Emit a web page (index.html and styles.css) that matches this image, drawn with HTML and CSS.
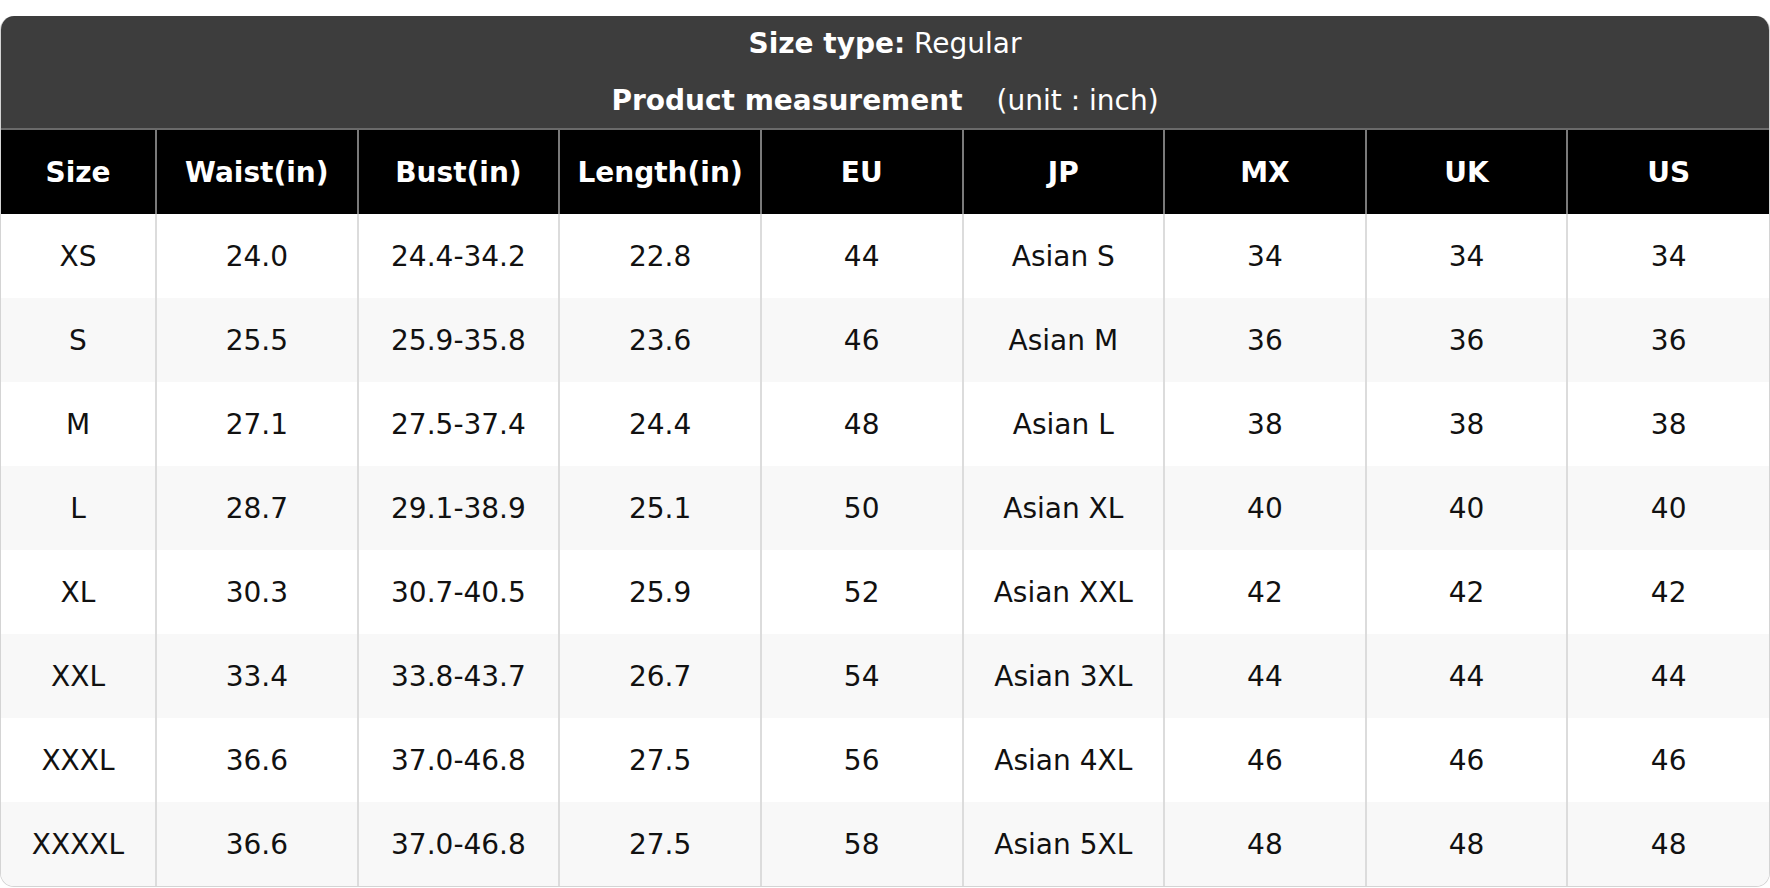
FILE: index.html
```html
<!DOCTYPE html>
<html lang="en">
<head>
<meta charset="utf-8">
<title>Size chart</title>
<link rel="stylesheet" href="styles.css">
</head>
<body>
<div class="chart">
  <div class="banner">
    <div class="banner-line"><strong>Size type:</strong> Regular</div>
    <div class="banner-line"><strong>Product measurement</strong><span class="unit">(unit : inch)</span></div>
  </div>
  <table class="sizes">
    <colgroup>
      <col class="col-first">
      <col><col><col><col><col><col><col><col>
    </colgroup>
    <thead>
      <tr><th>Size</th><th>Waist(in)</th><th>Bust(in)</th><th>Length(in)</th><th>EU</th><th>JP</th><th>MX</th><th>UK</th><th>US</th></tr>
    </thead>
    <tbody>
      <tr><td>XS</td><td>24.0</td><td>24.4-34.2</td><td>22.8</td><td>44</td><td>Asian S</td><td>34</td><td>34</td><td>34</td></tr>
      <tr><td>S</td><td>25.5</td><td>25.9-35.8</td><td>23.6</td><td>46</td><td>Asian M</td><td>36</td><td>36</td><td>36</td></tr>
      <tr><td>M</td><td>27.1</td><td>27.5-37.4</td><td>24.4</td><td>48</td><td>Asian L</td><td>38</td><td>38</td><td>38</td></tr>
      <tr><td>L</td><td>28.7</td><td>29.1-38.9</td><td>25.1</td><td>50</td><td>Asian XL</td><td>40</td><td>40</td><td>40</td></tr>
      <tr><td>XL</td><td>30.3</td><td>30.7-40.5</td><td>25.9</td><td>52</td><td>Asian XXL</td><td>42</td><td>42</td><td>42</td></tr>
      <tr><td>XXL</td><td>33.4</td><td>33.8-43.7</td><td>26.7</td><td>54</td><td>Asian 3XL</td><td>44</td><td>44</td><td>44</td></tr>
      <tr><td>XXXL</td><td>36.6</td><td>37.0-46.8</td><td>27.5</td><td>56</td><td>Asian 4XL</td><td>46</td><td>46</td><td>46</td></tr>
      <tr><td>XXXXL</td><td>36.6</td><td>37.0-46.8</td><td>27.5</td><td>58</td><td>Asian 5XL</td><td>48</td><td>48</td><td>48</td></tr>
    </tbody>
  </table>
</div>
</body>
</html>
```
FILE: styles.css
```css
html, body {
  margin: 0;
  padding: 0;
  background: #ffffff;
}

body {
  font-family: "DejaVu Sans", "Liberation Sans", sans-serif;
  font-size: 28px;
  color: #111111;
  padding-top: 16px;
}

.chart {
  width: 1770px;
  box-sizing: border-box;
  border: 1px solid #d4d4d4;
  border-top: none;
  border-radius: 14px;
  overflow: hidden;
}

.banner {
  background: #3d3d3d;
  color: #ffffff;
  height: 114px;
  box-sizing: border-box;
  padding-top: 8px;
  display: flex;
  flex-direction: column;
  align-items: center;
  gap: 17px;
  border-bottom: 2px solid #6a6a6a;
}

.banner-line {
  height: 40px;
  line-height: 40px;
  white-space: pre;
}

.banner-line strong {
  font-weight: bold;
}

.unit {
  margin-left: 34px;
}

.sizes {
  width: 100%;
  table-layout: fixed;
  border-collapse: collapse;
}

.col-first {
  width: 155px;
}

.sizes th,
.sizes td {
  padding: 0;
  text-align: center;
  vertical-align: middle;
  white-space: nowrap;
}

.sizes th {
  background: #000000;
  color: #ffffff;
  font-weight: bold;
  height: 84px;
  border-left: 2px solid #7a7a7a;
}

.sizes td {
  height: 84px;
  border-left: 2px solid #dcdcdc;
}

.sizes th:first-child,
.sizes td:first-child {
  border-left: none;
}

.sizes tbody tr:nth-child(odd) {
  background: #ffffff;
}

.sizes tbody tr:nth-child(even) {
  background: #f8f8f8;
}
```
